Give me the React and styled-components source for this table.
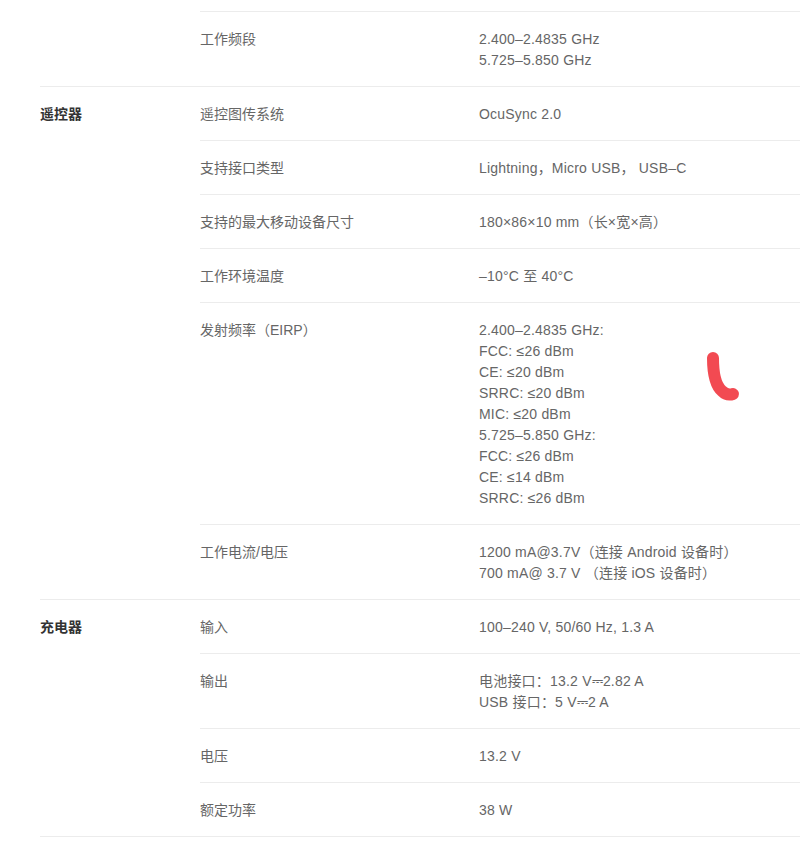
import React from 'react';
import styled, { createGlobalStyle } from 'styled-components';

const GlobalStyle = createGlobalStyle`
    body {
        margin: 0;
        background: #fff;
        font-family: "Liberation Sans", "Noto Sans CJK SC", sans-serif;
        font-size: 14px;
        color: #666;
    }
`;

const Page = styled.div`
    position: relative;
    padding-left: 40px;
    overflow: hidden;
`;

const Stub = styled.div`
    height: 11px;
    margin-left: 160px;
    border-bottom: 1px solid #ececec;
`;

const Section = styled.div`
    display: grid;
    grid-template-columns: 160px 1fr;
    border-top: ${(props) => (props.first ? 'none' : '1px solid #ececec')};
    border-bottom: ${(props) => (props.last ? '1px solid #ececec' : 'none')};
`;

const Label = styled.div`
    padding: 17px 0 15px;
    line-height: 21px;
    font-weight: bold;
    color: #333;
`;

const Rows = styled.div`
    display: flex;
    flex-direction: column;
`;

const Row = styled.div`
    display: grid;
    grid-template-columns: 279px 1fr;
    padding: 17px 0 15px;
    line-height: 21px;
    border-bottom: 1px solid #ececec;

    &:last-child {
        border-bottom: none;
    }
`;

const Key = styled.div`
    color: #666;
`;

const Value = styled.div`
    color: #666;
    letter-spacing: 0.2px;
    white-space: pre-line;
`;

const Mark = styled.svg`
    position: absolute;
    left: 700px;
    top: 345px;
`;

const sections = [
    {
        label: '',
        rows: [['工作频段', '2.400–2.4835 GHz\n5.725–5.850 GHz']],
    },
    {
        label: '遥控器',
        rows: [
            ['遥控图传系统', 'OcuSync 2.0'],
            ['支持接口类型', 'Lightning，Micro USB， USB–C'],
            ['支持的最大移动设备尺寸', '180×86×10 mm（长×宽×高）'],
            ['工作环境温度', '–10°C 至 40°C'],
            [
                '发射频率（EIRP）',
                '2.400–2.4835 GHz:\nFCC: ≤26 dBm\nCE: ≤20 dBm\nSRRC: ≤20 dBm\nMIC: ≤20 dBm\n5.725–5.850 GHz:\nFCC: ≤26 dBm\nCE: ≤14 dBm\nSRRC: ≤26 dBm',
            ],
            ['工作电流/电压', '1200 mA@3.7V（连接 Android 设备时）\n700 mA@ 3.7 V （连接 iOS 设备时）'],
        ],
    },
    {
        label: '充电器',
        rows: [
            ['输入', '100–240 V, 50/60 Hz, 1.3 A'],
            ['输出', '电池接口：13.2 V⎓2.82 A\nUSB 接口：5 V⎓2 A'],
            ['电压', '13.2 V'],
            ['额定功率', '38 W'],
        ],
    },
];

const App = () => {
    return (
        <Page>
            <GlobalStyle />
            <Stub />
            {sections.map((section, i) => (
                <Section key={i} first={i === 0} last={i === sections.length - 1}>
                    <Label>{section.label}</Label>
                    <Rows>
                        {section.rows.map(([k, v]) => (
                            <Row key={k}>
                                <Key>{k}</Key>
                                <Value>{v}</Value>
                            </Row>
                        ))}
                    </Rows>
                </Section>
            ))}
            <Mark width="50" height="62" viewBox="0 0 50 62">
                <path
                    d="M13 13 C 13 28, 15 40, 22 46 C 26 50, 30 50, 33 49"
                    fill="none"
                    stroke="#f24a52"
                    strokeWidth="12"
                    strokeLinecap="round"
                />
            </Mark>
        </Page>
    );
};

export default App;
